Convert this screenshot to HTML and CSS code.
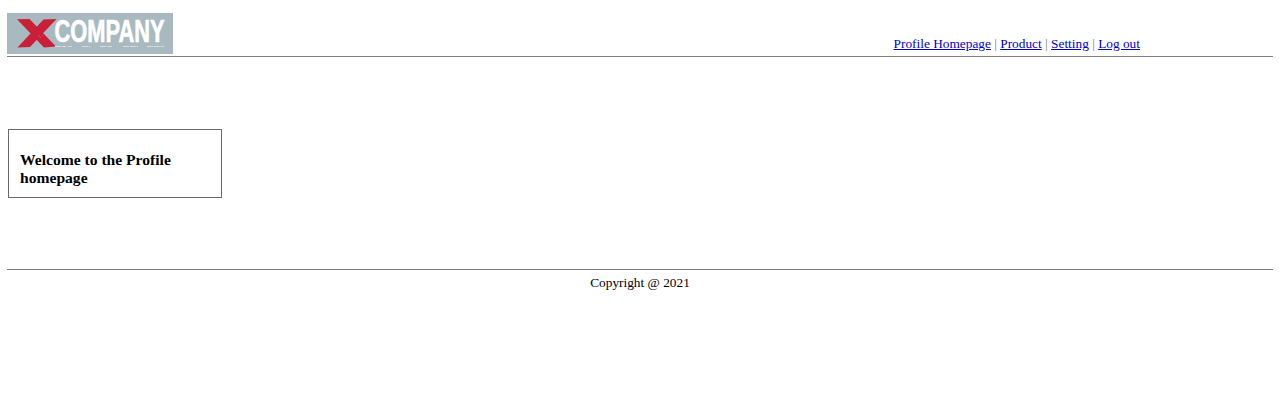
FILE: index.html
```html
<!DOCTYPE html>
<html lang="en">
<head>
<meta charset="utf-8">
<title>Profile Homepage</title>
<link rel="stylesheet" href="styles.css">
</head>
<body>
<header class="header">
  <svg class="logo" viewBox="0 0 166 41" role="img" aria-label="XCompany">
    <rect width="166" height="41" fill="#a9b9c0"/>
    <g class="logo-mark">
      <path d="M10 6.3 L22.5 6 L49 33.5 L37 34.5 Z" fill="#c91f38"/>
      <path d="M36.5 6.5 L49.5 6 L23 34 L10.5 34.5 Z" fill="#c91f38"/>
      <path d="M31 22 L34 25 M35 22 L36 23" stroke="#d8586a" stroke-width="0.8" fill="none"/>
    </g>
    <text class="logo-text" x="47.5" y="28.8" textLength="110" lengthAdjust="spacingAndGlyphs">COMPANY</text>
    <path d="M48 33.5H59M61 33.5H65M75 33.5H83M93 33.5H105M116 33.5H131M140 33.5H157" stroke="#d5dde0" stroke-width="1.2" stroke-dasharray="6 0.8"/>
  </svg>
  <nav class="nav">
    <a href="#">Profile Homepage</a> | <a href="#">Product</a> | <a href="#">Setting</a> | <a href="#">Log out</a>
  </nav>
</header>
<main class="main">
  <section class="card"><h1 class="title">Welcome to the Profile homepage</h1></section>
</main>
<footer class="footer">Copyright @ 2021</footer>
</body>
</html>
```
FILE: styles.css
```css
body {
  margin: 0;
  padding: 13px 6px 0 7px;
  background: #fff;
  color: #000;
  font-family: "Liberation Serif", "Times New Roman", serif;
  font-size: 13.33px;
}
.header {
  display: flex;
  justify-content: space-between;
  height: 43px;
  border-bottom: 1px solid #808080;
}
.logo {
  width: 166px;
  height: 41px;
  overflow: visible;
}
.logo-text {
  font: bold 32px "Liberation Sans", Arial, sans-serif;
  fill: #fff;
  stroke: #fff;
  stroke-width: 0.7px;
}
.nav {
  margin-right: 133px;
  padding-top: 23px;
  line-height: 15px;
  color: #808080;
  white-space: nowrap;
}
.nav a {
  color: #0000c8;
}
.main {
  box-sizing: border-box;
  height: 212px;
  padding: 72px 0 0 1px;
}
.card {
  box-sizing: border-box;
  width: 214px;
  height: 69px;
  padding: 21px 11px 0;
  border: 1px solid #696969;
}
.title {
  margin: 0;
  font-size: 15.6px;
  line-height: 18px;
}
.footer {
  padding-top: 5px;
  border-top: 1px solid #808080;
  line-height: 15px;
  text-align: center;
}
```
